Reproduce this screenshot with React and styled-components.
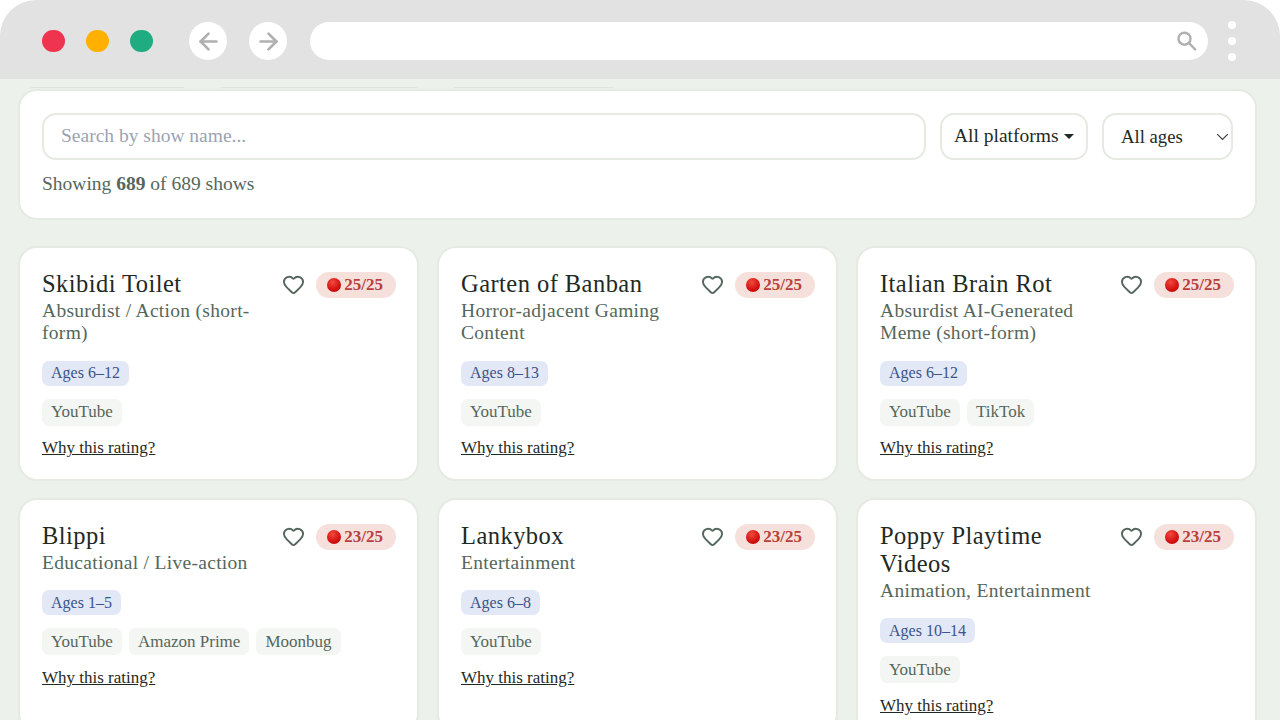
import React from 'react'
import styled, { createGlobalStyle } from 'styled-components'
import { ArrowLeft, ArrowRight, Heart } from 'lucide-react'

const GlobalStyle = createGlobalStyle`
  html, body {
    margin: 0;
    height: 720px;
    overflow: hidden;
    background: #ffffff;
    font-family: 'Liberation Serif', 'DejaVu Serif', serif;
  }
  * { box-sizing: border-box; }
`

const Page = styled.div`
  width: 1280px;
  height: 720px;
  overflow: hidden;
`

const BrowserBar = styled.header`
  height: 79px;
  padding: 22px 44px 19px 42px;
  display: flex;
  align-items: center;
  background: #e2e2e2;
  border-radius: 36px 36px 0 0;
`

const Light = styled.span`
  width: 22.5px;
  height: 22.5px;
  margin-right: 21.5px;
  border-radius: 50%;
  background: ${(props) => props.color};
`

const NavButton = styled.button`
  width: 38px;
  height: 38px;
  margin-right: 22px;
  padding: 0;
  border: none;
  border-radius: 50%;
  background: #ffffff;
  color: #b0b0b0;
  display: flex;
  align-items: center;
  justify-content: center;
  &:first-of-type { margin-left: 15px; }
`

const AddressBar = styled.div`
  flex: 1;
  height: 38px;
  margin-left: 1px;
  padding-right: 9px;
  border-radius: 19px;
  background: #ffffff;
  color: #b0b0b0;
  display: flex;
  align-items: center;
  justify-content: flex-end;
`

const MenuDots = styled.div`
  width: 8px;
  margin-left: 20px;
  display: flex;
  flex-direction: column;
  gap: 8px;
  span {
    width: 8px;
    height: 8px;
    border-radius: 50%;
    background: #ffffff;
  }
`

const Content = styled.main`
  height: 641px;
  padding: 8px 23px 0 18px;
  background: #ecf1ec;
`

const TabPeek = styled.div`
  height: 2px;
  padding: 0 12px;
  display: flex;
  gap: 35px;
`

const TabEdge = styled.span`
  width: ${(props) => props.width}px;
  height: 2px;
  border-top: 1px solid #dfe5dc;
  border-radius: 8px 8px 0 0;
`

const FilterPanel = styled.section`
  height: 131px;
  padding: 22px 22px 0;
  background: #ffffff;
  border: 2px solid #e5eae2;
  border-radius: 19px;
`

const FilterRow = styled.div`
  display: flex;
  align-items: center;
  gap: 14px;
`

const SearchBox = styled.div`
  flex: 1;
  height: 47px;
  padding: 0 17px 2px;
  border: 2px solid #e5eae2;
  border-radius: 14px;
  display: flex;
  align-items: center;
  color: #9ca3b4;
  font-size: 19.5px;
`

const PlatformDropdown = styled.div`
  width: 148px;
  height: 47px;
  padding: 0 12px 2px;
  border: 2px solid #e5eae2;
  border-radius: 14px;
  display: flex;
  align-items: center;
  color: #1f2a24;
  font-size: 19.5px;
  white-space: nowrap;
`

const Caret = styled.span`
  width: 0;
  height: 0;
  margin: 2px 0 0 5px;
  border-left: 5px solid transparent;
  border-right: 5px solid transparent;
  border-top: 5px solid #1f2a24;
`

const AgeDropdown = styled.div`
  width: 131px;
  height: 47px;
  padding: 0 2px 0 17px;
  border: 2px solid #e5eae2;
  border-radius: 14px;
  display: flex;
  align-items: center;
  justify-content: space-between;
  color: #1f2a24;
  font-size: 18.7px;
`

const ResultCount = styled.p`
  margin: 12px 0 0;
  color: #55675c;
  font-size: 19.5px;
  line-height: 24px;
  b { font-weight: 700; }
`

const CardGrid = styled.div`
  margin-top: 26px;
  display: grid;
  grid-template-columns: repeat(3, 401px);
  column-gap: 18px;
  row-gap: 17px;
  align-items: start;
`

const Card = styled.article`
  min-height: 235px;
  padding: 22px 21px 18px 22px;
  background: #ffffff;
  border: 2px solid #e5eae2;
  border-radius: 19px;
`

const CardHead = styled.div`
  display: flex;
  align-items: flex-start;
`

const TitleWrap = styled.div`
  flex: 1;
  padding-right: 22px;
`

const Title = styled.h2`
  margin: 0;
  color: #1f2a24;
  font-size: 24.5px;
  font-weight: 400;
  letter-spacing: 0.45px;
  line-height: 28px;
`

const Genre = styled.p`
  margin: 2px 0 0;
  color: #55675c;
  font-size: 19.5px;
  letter-spacing: 0.3px;
  line-height: 22.4px;
`

const HeartButton = styled.span`
  margin: 3px 11px 0 0;
  color: #55675c;
  display: flex;
`

const RatingPill = styled.span`
  height: 26px;
  margin-top: 1.5px;
  padding: 0 13px 0 11px;
  border-radius: 13px;
  background: #f6e0dc;
  color: #b8403a;
  font-size: 17px;
  font-weight: 700;
  display: flex;
  align-items: center;
  gap: 3px;
`

const RedDot = styled.span`
  width: 14px;
  height: 14px;
  border-radius: 50%;
  background: radial-gradient(circle at 40% 30%, #f04a3e, #d40f0f 60%, #a80c0c);
`

const TagRow = styled.div`
  margin-top: ${(props) => props.$top}px;
  display: flex;
  gap: 7px;
`

const AgeTag = styled.span`
  height: 25px;
  padding: 0 9px;
  border-radius: 7px;
  background: #e2e8f6;
  color: #3c5488;
  font-size: 16px;
  display: flex;
  align-items: center;
`

const PlatformTag = styled.span`
  height: 27px;
  padding: 0 9px;
  border-radius: 7px;
  background: #f3f6f2;
  color: #55675c;
  font-size: 17px;
  display: flex;
  align-items: center;
`

const WhyLink = styled.a`
  display: block;
  margin-top: 11.5px;
  color: #1f2a24;
  font-size: 17px;
  line-height: 22px;
  text-decoration: underline;
`

const shows = [
  { title: 'Skibidi Toilet', genre: 'Absurdist / Action (short-form)', score: '25/25', ages: 'Ages 6–12', platforms: ['YouTube'] },
  { title: 'Garten of Banban', genre: 'Horror-adjacent Gaming Content', score: '25/25', ages: 'Ages 8–13', platforms: ['YouTube'] },
  { title: 'Italian Brain Rot', genre: 'Absurdist AI-Generated Meme (short-form)', score: '25/25', ages: 'Ages 6–12', platforms: ['YouTube', 'TikTok'] },
  { title: 'Blippi', genre: 'Educational / Live-action', score: '23/25', ages: 'Ages 1–5', platforms: ['YouTube', 'Amazon Prime', 'Moonbug'] },
  { title: 'Lankybox', genre: 'Entertainment', score: '23/25', ages: 'Ages 6–8', platforms: ['YouTube'] },
  { title: 'Poppy Playtime Videos', genre: 'Animation, Entertainment', score: '23/25', ages: 'Ages 10–14', platforms: ['YouTube'] },
]

const ShowCard = ({ show }) => (
  <Card>
    <CardHead>
      <TitleWrap>
        <Title>{show.title}</Title>
        <Genre>{show.genre}</Genre>
      </TitleWrap>
      <HeartButton>
        <Heart size={23} strokeWidth={2} />
      </HeartButton>
      <RatingPill>
        <RedDot />
        {show.score}
      </RatingPill>
    </CardHead>
    <TagRow $top={16}>
      <AgeTag>{show.ages}</AgeTag>
    </TagRow>
    <TagRow $top={13}>
      {show.platforms.map((name) => (
        <PlatformTag key={name}>{name}</PlatformTag>
      ))}
    </TagRow>
    <WhyLink href="#">Why this rating?</WhyLink>
  </Card>
)

const App = () => (
  <Page>
    <GlobalStyle />
    <BrowserBar>
      <Light color="#ef344f" />
      <Light color="#ffb000" />
      <Light color="#1fac80" />
      <NavButton>
        <ArrowLeft size={27} strokeWidth={2.4} />
      </NavButton>
      <NavButton>
        <ArrowRight size={27} strokeWidth={2.4} />
      </NavButton>
      <AddressBar>
        <svg width="24" height="24" viewBox="0 0 24 24" fill="none" stroke="currentColor" strokeWidth="2.4" strokeLinecap="round">
          <circle cx="9.5" cy="9.7" r="6" />
          <path d="M14 14.2l6.2 6.3" />
        </svg>
      </AddressBar>
      <MenuDots>
        <span />
        <span />
        <span />
      </MenuDots>
    </BrowserBar>
    <Content>
      <TabPeek>
        <TabEdge width={155} />
        <TabEdge width={198} />
        <TabEdge width={161} />
      </TabPeek>
      <FilterPanel>
        <FilterRow>
          <SearchBox>Search by show name...</SearchBox>
          <PlatformDropdown>
            All platforms
            <Caret />
          </PlatformDropdown>
          <AgeDropdown>
            All ages
            <svg width="13" height="8" viewBox="0 0 13 8" fill="none" stroke="#3a3f3c" strokeWidth="1.2">
              <path d="M1.2 1.2l5.3 5.3 5.3-5.3" />
            </svg>
          </AgeDropdown>
        </FilterRow>
        <ResultCount>
          Showing <b>689</b> of 689 shows
        </ResultCount>
      </FilterPanel>
      <CardGrid>
        {shows.map((show) => (
          <ShowCard key={show.title} show={show} />
        ))}
      </CardGrid>
    </Content>
  </Page>
)

export default App
